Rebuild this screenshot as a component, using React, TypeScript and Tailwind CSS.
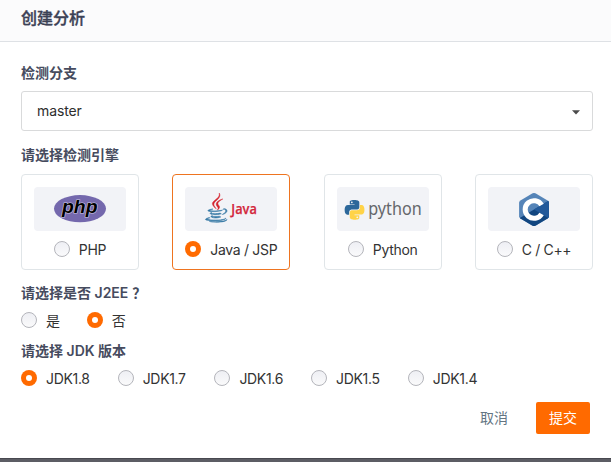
import type { ReactNode } from "react";

function Radio({ checked = false }: { checked?: boolean }) {
  return checked ? (
    <span className="flex size-4 shrink-0 items-center justify-center rounded-full bg-[#ff6a00]">
      <span className="size-1.5 rounded-full bg-white" />
    </span>
  ) : (
    <span className="size-4 shrink-0 rounded-full border border-[#b4b5bb] bg-linear-to-b from-[#eeeff4] to-[#fafafb]" />
  );
}

function Option({ label, checked }: { label: string; checked?: boolean }) {
  return (
    <label className="flex h-5 items-center gap-[9px] whitespace-nowrap text-sm leading-5 tracking-[-0.32px] text-[#333]">
      <Radio checked={checked} />
      <span className="relative top-px">{label}</span>
    </label>
  );
}

function EngineCard({ label, checked, children }: { label: string; checked?: boolean; children: ReactNode }) {
  return (
    <div
      className={`flex h-24 w-[118px] flex-col items-center rounded-[4px] border pt-3 ${
        checked ? "border-[#ee7420]" : "border-[#e0e5e8]"
      }`}
    >
      <div className="mb-2 h-11 w-[92px] rounded-[4px] bg-[#f2f3f7]">{children}</div>
      <Option label={label} checked={checked} />
    </div>
  );
}

function PhpLogo() {
  return (
    <svg width="92" height="44" viewBox="0 0 92 44">
      <ellipse cx="46" cy="21.7" rx="26" ry="13.6" fill="#7468ad" />
      <text
        x="28"
        y="26"
        fontFamily="Liberation Sans, sans-serif"
        fontSize="18.5"
        fontWeight="700"
        fontStyle="italic"
        textLength="35.5"
        lengthAdjust="spacingAndGlyphs"
        fill="#000"
        stroke="#cfc8e2"
        strokeWidth="1.2"
        paintOrder="stroke"
      >
        php
      </text>
    </svg>
  );
}

function JavaLogo() {
  return (
    <svg width="92" height="44" viewBox="0 0 92 44">
      <g transform="translate(20.3 6) scale(.057)">
        <path
          fill="#d5232f"
          stroke="#d5232f"
          strokeWidth="8"
          d="M192.34 280.8c-19-42.7-83.1-80.2 0-145.8C296 53.2 242.84 0 242.84 0c21.5 84.5-75.6 110.1-110.7 162.6-23.9 35.9 11.7 74.4 60.2 118.2zM306.94 104.6c.1 0-175.2 43.8-91.5 140.2 24.7 28.4-6.5 54-6.5 54s62.7-32.4 33.9-72.9c-26.9-37.8-47.5-56.6 64.1-121.3z"
        />
        <path
          fill="#3578a5"
          stroke="#3578a5"
          strokeWidth="10"
          d="M277.74 312.9c9.8-6.7 23.4-12.5 23.4-12.5s-38.7 7-77.2 10.2c-47.1 3.9-97.7 4.7-123.1 1.3-60.1-8 33-30.1 33-30.1s-36.1-2.4-80.6 19c-52.5 25.4 130 37 224.5 12.1zM300.84 375.1a12.19 12.19 0 0 1-2 2.6c128.3-33.7 81.1-118.9 19.8-97.3a17.33 17.33 0 0 0-8.2 6.3 70.45 70.45 0 0 1 11-3c31-6.5 75.5 41.5-20.6 91.4zM348 437.4s14.5 11.9-15.9 21.2c-57.9 17.5-240.8 22.8-291.6.7-18.3-7.9 16-19 26.8-21.3 11.2-2.4 17.7-2 17.7-2-20.3-14.3-131.3 28.1-56.4 40.2C232.84 509.4 401 461.3 348 437.4zM124.44 396c-78.7 22 47.9 67.4 148.1 24.5a185.89 185.89 0 0 1-28.2-13.8c-44.7 8.5-65.4 9.1-106 4.5-33.5-3.8-13.9-15.2-13.9-15.2zm179.8 97.2c-78.7 14.8-175.8 13.1-233.3 3.6 0-.1 11.8 9.7 72.4 13.6 92.2 5.9 233.8-3.3 237.1-46.9 0 0-6.4 16.5-76.2 29.7zM260.64 353c-59.2 11.4-93.5 11.1-136.8 6.6-33.5-3.5-11.6-19.7-11.6-19.7-86.8 28.8 48.2 61.4 169.5 25.9a60.37 60.37 0 0 1-21.1-12.8z"
        />
      </g>
      <text
        x="46.3"
        y="27.2"
        fontFamily="Open Sans, sans-serif"
        fontSize="14.5"
        fontWeight="600"
        textLength="25.5"
        lengthAdjust="spacingAndGlyphs"
        fill="#d3263c"
        stroke="#d3263c"
        strokeWidth=".25"
      >
        Java
      </text>
    </svg>
  );
}

function PythonLogo() {
  return (
    <svg width="92" height="44" viewBox="0 0 92 44">
      <g transform="translate(7.7 13) scale(.82)">
        <path
          fill="#2c679a"
          d="M14.25.18l.9.2.73.26.59.3.45.32.34.34.25.34.16.33.1.3.04.26.02.2-.01.13V8.5l-.05.63-.13.55-.21.46-.26.38-.3.31-.33.25-.35.19-.35.14-.33.1-.3.07-.26.04-.21.02H8.77l-.69.05-.59.14-.5.22-.41.27-.33.32-.27.35-.2.36-.15.37-.1.35-.07.32-.04.27-.02.21v3.06H3.17l-.21-.03-.28-.07-.32-.12-.35-.18-.36-.26-.36-.36-.35-.46-.32-.59-.28-.73-.21-.88-.14-1.05-.05-1.23.06-1.22.16-1.04.24-.87.32-.71.36-.57.4-.44.42-.33.42-.24.4-.16.36-.1.32-.05.24-.01h.16l.06.01h8.16v-.83H6.18l-.01-2.75-.02-.37.05-.34.11-.31.17-.28.25-.26.31-.23.38-.2.44-.18.51-.15.58-.12.64-.1.71-.06.77-.04.84-.02 1.27.05zm-6.3 1.98l-.23.33-.08.41.08.41.23.34.33.22.41.09.41-.09.33-.22.23-.34.08-.41-.08-.41-.23-.33-.33-.22-.41-.09-.41.09z"
        />
        <path
          fill="#ffd348"
          d="M21.04 6.11l.28.06.32.12.35.18.36.27.36.35.35.47.32.59.28.73.21.88.14 1.04.05 1.23-.06 1.23-.16 1.04-.24.86-.32.71-.36.57-.4.45-.42.33-.42.24-.4.16-.36.09-.32.05-.24.02-.16-.01h-8.22v.82h5.84l.01 2.76.02.36-.05.34-.11.31-.17.29-.25.25-.31.24-.38.2-.44.17-.51.15-.58.13-.64.09-.71.07-.77.04-.84.01-1.27-.04-1.07-.14-.9-.2-.73-.25-.59-.3-.45-.33-.34-.34-.25-.34-.16-.33-.1-.3-.04-.25-.02-.2.01-.13v-5.34l.05-.64.13-.54.21-.46.26-.38.3-.32.33-.24.35-.2.35-.14.33-.1.3-.06.26-.04.21-.02.13-.01h5.84l.69-.05.59-.14.5-.21.41-.28.33-.32.27-.35.2-.36.15-.36.1-.35.07-.32.04-.28.02-.21V6.07h2.09l.14.01zm-6.47 14.25l-.23.33-.08.41.08.41.23.33.33.23.41.08.41-.08.33-.23.23-.33.08-.41-.08-.41-.23-.33-.33-.23-.41-.08-.41.08z"
        />
      </g>
      <text
        x="31.2"
        y="28"
        fontFamily="Noto Sans, sans-serif"
        fontSize="18"
        textLength="53.5"
        lengthAdjust="spacingAndGlyphs"
        fill="#65676b"
      >
        python
      </text>
    </svg>
  );
}

function CLogo() {
  return (
    <svg width="92" height="44" viewBox="0 0 92 44">
      <clipPath id="hexagon">
        <path d="M44.6 6.3q1.4-.8 2.8 0L59.6 13.4q1.3.8 1.3 2.3v13.6q0 1.5-1.3 2.3L47.4 38.7q-1.4.8-2.8 0L32.4 31.6q-1.3-.8-1.3-2.3V15.7q0-1.5 1.3-2.3z" />
      </clipPath>
      <g clipPath="url(#hexagon)">
        <rect x="30" y="5" width="32" height="35" fill="#5584b8" />
        <path d="M62 13L46 22.5 30 32v9h32z" fill="#124680" />
        <path d="M62 13L46 22.5l16 9.5z" fill="#22599a" />
      </g>
      <path d="M53.6 18.1a8.8 8.8 0 1 0 0 8.8" fill="none" stroke="#fff" strokeWidth="5" />
    </svg>
  );
}

const jdkVersions = ["JDK1.8", "JDK1.7", "JDK1.6", "JDK1.5", "JDK1.4"];

function SectionTitle({ children }: { children: ReactNode }) {
  return <div className="h-5 text-sm font-semibold leading-5 text-[#464b5e]">{children}</div>;
}

export default function App() {
  return (
    <div className="flex h-[462px] w-[611px] flex-col bg-white font-['Inter','Noto_Sans_CJK_SC',sans-serif]">
      <header className="h-[42px] border-b border-[#dee1e5] bg-[#fbfbfc] px-[21px] pt-[6px]">
        <h1 className="text-base font-medium leading-6 text-[#3c4155] [-webkit-text-stroke:0.35px_#3c4155]">
          创建分析
        </h1>
      </header>
      <main className="flex w-[593px] flex-1 flex-col pl-[21px] pt-[21px]">
        <SectionTitle>检测分支</SectionTitle>
        <div className="mt-2 flex h-10 shrink-0 items-center justify-between rounded-[3px] border border-[#d9dadb] pl-[15px] pr-3 text-sm tracking-[-0.1px] text-[#2d2d2d]">
          <span>master</span>
          <svg width="8" height="5" viewBox="0 0 8 5" className="mt-0.5">
            <path d="M0 .3h8L4 4.6z" fill="#4b4b4b" />
          </svg>
        </div>
        <div className="mt-[14px]">
          <SectionTitle>请选择检测引擎</SectionTitle>
        </div>
        <div className="mt-[9px] flex justify-between">
          <EngineCard label="PHP">
            <PhpLogo />
          </EngineCard>
          <EngineCard label="Java / JSP" checked>
            <JavaLogo />
          </EngineCard>
          <EngineCard label="Python">
            <PythonLogo />
          </EngineCard>
          <EngineCard label="C / C++">
            <CLogo />
          </EngineCard>
        </div>
        <div className="mt-[13px]">
          <SectionTitle>
            请选择是否 J2EE<span className="ml-1">？</span>
          </SectionTitle>
        </div>
        <div className="mt-[7px] flex gap-[27px]">
          <Option label="是" />
          <Option label="否" checked />
        </div>
        <div className="mt-[11px]">
          <SectionTitle>请选择 JDK 版本</SectionTitle>
        </div>
        <div className="mt-[7px] flex">
          {jdkVersions.map((version, index) => (
            <div key={version} className="w-[96.7px]">
              <Option label={version} checked={index === 0} />
            </div>
          ))}
        </div>
        <div className="mr-[3px] mt-[14px] flex justify-end gap-7 text-sm">
          <button className="h-8 text-[#637582]">取消</button>
          <button className="h-8 w-[54px] rounded-[2px] bg-[#ff6a00] text-white">提交</button>
        </div>
      </main>
      <footer className="h-1 border-t border-[#484950] bg-[#5c5d64]" />
    </div>
  );
}
